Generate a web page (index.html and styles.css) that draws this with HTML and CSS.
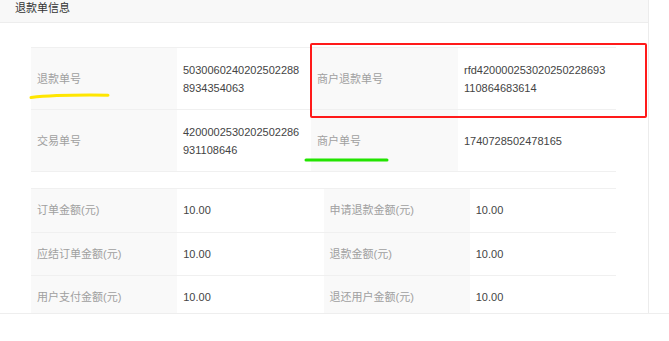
FILE: index.html
```
<!DOCTYPE html>
<html lang="zh">
<head>
<meta charset="utf-8">
<link rel="stylesheet" href="styles.css">
</head>
<body>
<div class="page">
  <div class="panel">
    <div class="panel-head">退款单信息</div>
    <div class="panel-body">
      <table class="info info-ids">
        <colgroup><col class="c1"><col class="c2"><col class="c3"><col class="c4"></colgroup>
        <tr>
          <td class="label">退款单号</td>
          <td class="value">50300602402025022888934354063</td>
          <td class="label">商户退款单号</td>
          <td class="value">rfd420000253020250228693110864683614</td>
        </tr>
        <tr>
          <td class="label">交易单号</td>
          <td class="value">4200002530202502286931108646</td>
          <td class="label">商户单号</td>
          <td class="value">1740728502478165</td>
        </tr>
      </table>
      <table class="info info-amounts">
        <tr>
          <td class="label">订单金额(元)</td>
          <td class="value">10.00</td>
          <td class="label">申请退款金额(元)</td>
          <td class="value">10.00</td>
        </tr>
        <tr>
          <td class="label">应结订单金额(元)</td>
          <td class="value">10.00</td>
          <td class="label">退款金额(元)</td>
          <td class="value">10.00</td>
        </tr>
        <tr>
          <td class="label">用户支付金额(元)</td>
          <td class="value">10.00</td>
          <td class="label">退还用户金额(元)</td>
          <td class="value">10.00</td>
        </tr>
      </table>
    </div>
  </div>
  <div class="mark mark-red"></div>
  <svg class="mark mark-yellow" width="84" height="8" viewBox="0 0 84 8"><path d="M3 5.5 Q 30 2.5 80 3.2" stroke="#ffe600" stroke-width="3" fill="none" stroke-linecap="round"/></svg>
  <svg class="mark mark-green" width="88" height="8" viewBox="0 0 88 8"><path d="M3 4 L 84 4" stroke="#22e400" stroke-width="3" fill="none" stroke-linecap="round"/></svg>
</div>
</body>
</html>
```

FILE: styles.css
```
html, body {
  margin: 0;
  padding: 0;
  background: #fff;
}
body {
  font-family: "Liberation Sans", "Noto Sans CJK SC", sans-serif;
  font-size: 11px;
}
.page {
  position: relative;
  width: 669px;
  height: 313px;
  border-bottom: 1px solid #eeeeee;
  overflow: hidden;
}
.panel {
  width: 648px;
  height: 313px;
  border-right: 1px solid #ececec;
  overflow: hidden;
}
.panel-head {
  height: 23px;
  box-sizing: border-box;
  background: #f8f8f8;
  border-bottom: 1px solid #ededed;
  padding-left: 15px;
  line-height: 16px;
  color: #333;
  font-size: 11px;
}
.panel-body {
  padding: 24px 0 0 31px;
  display: flex;
  flex-direction: column;
  gap: 16px;
}
.info {
  width: 585px;
  border-collapse: collapse;
  table-layout: fixed;
}
.info-ids .c1 { width: 146px; }
.info-ids .c2 { width: 134px; }
.info-ids .c3 { width: 147px; }
.info-ids .c4 { width: 158px; }
.info td {
  border-top: 1px solid #f0f0f0;
  border-bottom: 1px solid #f0f0f0;
  padding: 12px 8px 12px 6px;
  line-height: 18.5px;
  vertical-align: middle;
  word-break: break-all;
}
.info-ids td {
  line-height: 18px;
  padding-top: 12.5px;
  padding-bottom: 12.5px;
}
.label {
  background: #f9f9f9;
  color: #a0a0a0;
}
.value {
  background: #fff;
  color: #444;
}
.mark {
  position: absolute;
}
.mark-red {
  left: 310px;
  top: 43px;
  width: 333px;
  height: 71px;
  border: 2px solid #ff1a1a;
  border-radius: 2px;
}
.mark-yellow {
  left: 28px;
  top: 92px;
}
.mark-green {
  left: 303px;
  top: 156px;
}
```
